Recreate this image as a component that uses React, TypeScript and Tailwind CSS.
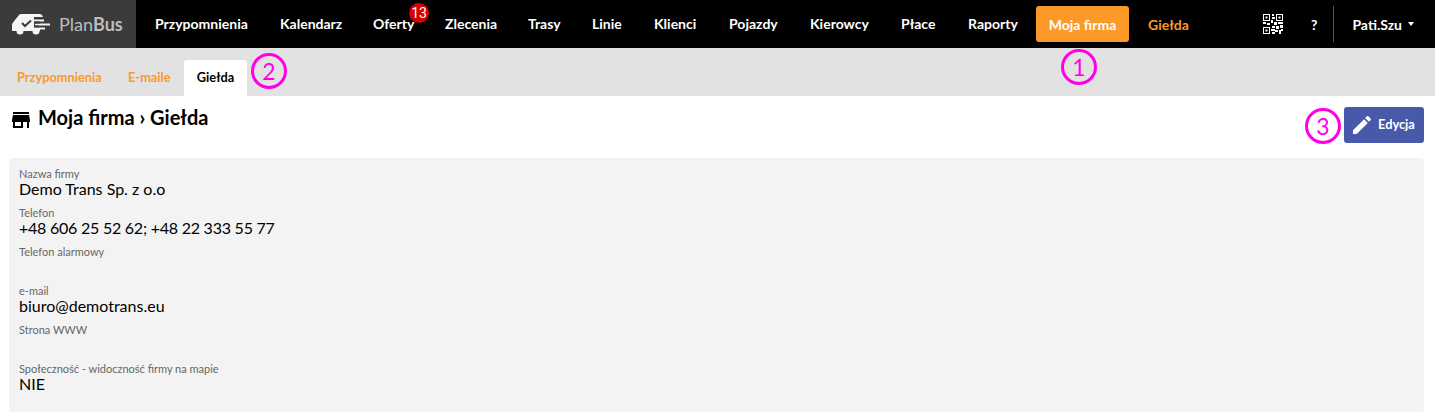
const navItems = [
  { label: "Przypomnienia", width: "w-[125px]" },
  { label: "Kalendarz", width: "w-[93px]" },
  { label: "Oferty", width: "w-[72px]" },
  { label: "Zlecenia", width: "w-[83px]" },
  { label: "Trasy", width: "w-[64px]" },
  { label: "Linie", width: "w-[62px]" },
  { label: "Klienci", width: "w-[75px]" },
  { label: "Pojazdy", width: "w-[81px]" },
  { label: "Kierowcy", width: "w-[91px]" },
  { label: "Płace", width: "w-[67px]" },
  { label: "Raporty", width: "w-[84px]" },
];

const fields = [
  { label: "Nazwa firmy", value: "Demo Trans Sp. z o.o" },
  { label: "Telefon", value: "+48 606 25 52 62; +48 22 333 55 77" },
  { label: "Telefon alarmowy", value: "" },
  { label: "e-mail", value: "biuro@demotrans.eu" },
  { label: "Strona WWW", value: "" },
  { label: "Społeczność - widoczność firmy na mapie", value: "NIE" },
];

const Marker = ({ n, className }: { n: number; className: string }) => (
  <div className={`absolute w-[36px] h-[36px] rounded-full border-[3px] border-[#ff00e6] text-[#ff00e6] flex items-center justify-center text-[23px] font-normal ${className}`}>
    {n}
  </div>
);

const Logo = () => (
  <svg width="38" height="21" viewBox="0 0 38 21" fill="none">
    <path d="M7 1c.5-.7 1.300-1 2-1h19c1 0 2 .8 3 3h-9v14H1c-.6 0-1-.5-1-1v-5c0-.8.3-1.500.8-2.300z" fill="#f5f5f5" />
    <circle cx="8" cy="17" r="3.500" fill="#f5f5f5" />
    <circle cx="24" cy="17" r="3.500" fill="#f5f5f5" />
    <path d="M20 17h8v-2h-8z" fill="#f5f5f5" />
    <path d="M10 9l3 3 6-5.500" stroke="#3b3b3b" strokeWidth="2" />
    <path d="M22 6.500h10M23 10.500h15M22 14.500h11" stroke="#f5f5f5" strokeWidth="2" />
    <path d="M22 8.500h6M22 12.500h5" stroke="#3b3b3b" strokeWidth="2" />
  </svg>
);

const Qr = () => (
  <svg width="20" height="20" viewBox="0 0 20 20" fill="#fff">
    <path fillRule="evenodd" d="M0 0h7v7H0zM1 1v5h5V1zM13 0h7v7h-7zM14 1v5h5V1zM0 13h7v7H0zM1 14v5h5v-5z" />
    <path d="M2.500 2.500h2v2h-2zM15.500 2.500h2v2h-2zM2.500 15.500h2v2h-2zM9 0h2v2H9zM9 3h3v2H9zM8 6h2v3H8zM0 8h3v2H0zM4 9h3v2H4zM11 8h3v3h-3zM15 8h5v2h-5zM9 12h3v2H9zM13 12h3v3h-3zM17 11h3v3h-3zM8 15h4v2H8zM12 16h3v2h-3zM16 16h2v4h-2zM9 18h3v2H9zM18 15h2v2h-2z" />
  </svg>
);

export default function App() {
  return (
    <div className="relative w-[1435px] h-[414px] overflow-hidden bg-white font-['Lato',sans-serif] text-black">
      {/* Top bar */}
      <nav className="h-[48px] bg-black flex items-center text-white text-[14px] font-bold">
        <div className="w-[136px] h-full bg-[#3b3b3b] flex items-center pl-[12px] gap-[9px]">
          <Logo />
          <span className="text-[18px] font-normal text-[#bdbdbd]">
            Plan<span className="font-bold">Bus</span>
          </span>
        </div>
        <ul className="flex items-center ml-[3px]">
          {navItems.map((item) => (
            <li key={item.label} className={`relative pl-[16px] leading-[36px] ${item.width}`}>
              {item.label}
              {item.label === "Oferty" && (
                <span className="absolute left-[52px] top-[-3px] w-[20px] h-[20px] rounded-full bg-[#d50000] flex items-center justify-center text-[14px] leading-none font-normal font-['Roboto',sans-serif]">
                  13
                </span>
              )}
            </li>
          ))}
        </ul>
        <div className="w-[93px] h-[36px] rounded-[3px] bg-[#fb9a28] flex items-center justify-center">Moja firma</div>
        <div className="ml-[19px] text-[#fb9a28]">Giełda</div>
        <div className="ml-auto flex items-center h-full">
          <Qr />
          <span className="ml-[28px]">?</span>
          <div className="ml-[16px] w-px h-[36px] bg-[#555]" />
          <span className="ml-[18px]">Pati.Szu</span>
          <span className="ml-[6px] mr-[21px] w-0 h-0 border-x-[3.500px] border-x-transparent border-t-[4px] border-t-white" />
        </div>
      </nav>

      {/* Tabs */}
      <div className="h-[48px] bg-[#e2e2e2] flex items-end pl-[4px] text-[12.800px] font-bold">
        <div className="h-[36px] w-[111px] pl-[13px] flex items-center text-[#fb9a28]">Przypomnienia</div>
        <div className="h-[36px] w-[69px] pl-[13px] flex items-center text-[#fb9a28]">E-maile</div>
        <div className="h-[36px] w-[63px] flex items-center justify-center bg-white rounded-t-[3px]">Giełda</div>
      </div>

      {/* Header */}
      <div className="flex justify-between pl-[9px] pr-[11px] pt-[11px] h-[62px]">
        <h1 className="flex items-center h-[20px] gap-[5px] text-[20px] font-bold leading-none">
          <svg className="mt-[6px]" width="24" height="24" viewBox="0 0 24 24" fill="#000">
            <path d="M20 4H4v2h16V4zm1 10v-2l-1-5H4l-1 5v2h1v6h10v-6h4v6h2v-6h1zm-9 4H6v-4h6v4z" />
          </svg>
          <span>Moja firma › Giełda</span>
        </h1>
        <button className="h-[36px] w-[80px] rounded-[3px] bg-[#4859aa] text-white text-[12.800px] font-bold flex items-center pl-[6px] gap-[4px]">
          <svg width="24" height="24" viewBox="0 0 24 24" fill="#fff">
            <path d="M3 17.250V21h3.750L17.810 9.940l-3.750-3.750L3 17.250zM20.710 7.040c.39-.39.39-1.020 0-1.410l-2.340-2.340c-.39-.39-1.020-.39-1.410 0l-1.830 1.830 3.750 3.750 1.830-1.830z" />
          </svg>
          Edycja
        </button>
      </div>

      {/* Details */}
      <div className="ml-[9px] mr-[11px] h-[254px] rounded-[4px] bg-[#f3f3f3] pl-[10px] pt-[9px]">
        {fields.map((f) => (
          <div key={f.label} className="h-[39px]">
            <div className="text-[11px] leading-[13px] text-[#666]">{f.label}</div>
            <div className={`text-[16px] leading-[17px] ${f.label === "Telefon" ? "tracking-[-0.24px]" : ""}`}>{f.value}</div>
          </div>
        ))}
      </div>

      <Marker n={1} className="left-[1061px] top-[49px]" />
      <Marker n={2} className="left-[251px] top-[53px]" />
      <Marker n={3} className="left-[1305px] top-[108px]" />
    </div>
  );
}
